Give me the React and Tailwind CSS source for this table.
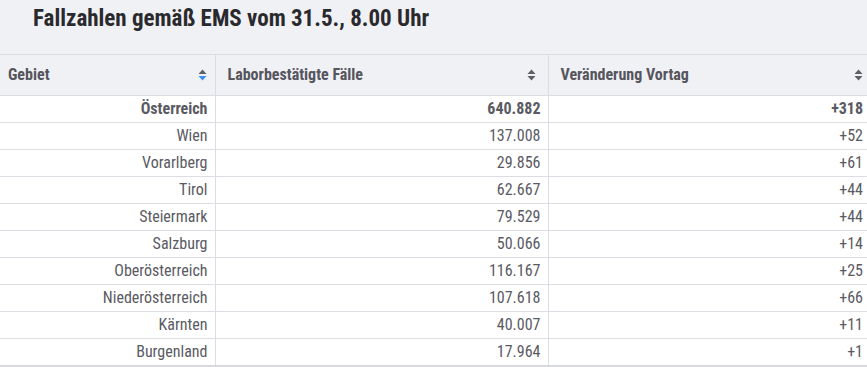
const rows = [
  ["Österreich", "640.882", "+318", true],
  ["Wien", "137.008", "+52"],
  ["Vorarlberg", "29.856", "+61"],
  ["Tirol", "62.667", "+44"],
  ["Steiermark", "79.529", "+44"],
  ["Salzburg", "50.066", "+14"],
  ["Oberösterreich", "116.167", "+25"],
  ["Niederösterreich", "107.618", "+66"],
  ["Kärnten", "40.007", "+11"],
  ["Burgenland", "17.964", "+1"],
];

function SortIcon({ active }) {
  return (
    <svg width="9" height="12" viewBox="0 0 9 12" className="shrink-0">
      <path d="M4.5 0.5 L8.5 5 L0.5 5 Z" fill="#5f5f66" />
      <path d="M4.5 11.5 L8.5 7 L0.5 7 Z" fill={active ? "#3d8ff5" : "#5f5f66"} />
    </svg>
  );
}

export default function App() {
  return (
    <div className="h-[367px] w-[867px] overflow-hidden bg-[#f0f1f5] font-['Roboto',sans-serif] font-stretch-condensed text-[#5a5a63]">
      <h1 className="h-[54px] pl-[33px] pt-[3px] text-[23px] font-bold leading-[32px] text-[#2a2a2e]">
        Fallzahlen gemäß EMS vom 31.5., 8.00 Uhr
      </h1>
      <table className="w-full table-fixed border-collapse border-b-[2px] border-b-[#d8d9de] text-[16px]">
        <colgroup>
          <col className="w-[215px]" />
          <col className="w-[333px]" />
          <col />
        </colgroup>
        <thead>
          <tr className="h-[41px] border-t border-[#dcdde2] bg-[#f0f1f5] text-left font-bold text-[#55555e]">
            <th className="border-r border-[#dcdde2] px-[8px]">
              <div className="flex items-center justify-between">
                <span>Gebiet</span>
                <SortIcon active />
              </div>
            </th>
            <th className="border-r border-[#dcdde2] px-[12px]">
              <div className="flex items-center justify-between">
                <span>Laborbestätigte Fälle</span>
                <SortIcon />
              </div>
            </th>
            <th className="px-[12px] pr-[4px]">
              <div className="flex items-center justify-between">
                <span>Veränderung Vortag</span>
                <SortIcon />
              </div>
            </th>
          </tr>
        </thead>
        <tbody className="bg-white">
          {rows.map(([name, cases, diff, bold]) => (
            <tr key={name} className={`h-[27px] border-t border-[#dcdde2] text-right ${bold ? "font-bold" : ""}`}>
              <td className="border-r border-[#dcdde2] pr-[7px]">{name}</td>
              <td className="border-r border-[#dcdde2] pr-[7px]">{cases}</td>
              <td className="pr-[4px]">{diff}</td>
            </tr>
          ))}
        </tbody>
      </table>
    </div>
  );
}
